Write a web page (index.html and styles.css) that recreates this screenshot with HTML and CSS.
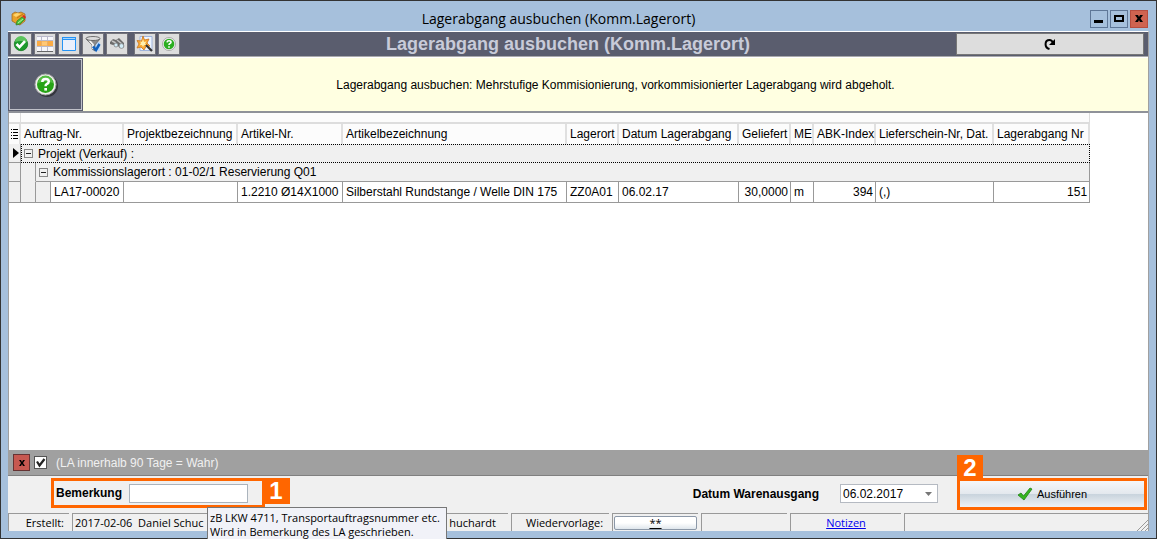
FILE: index.html
```html
<!DOCTYPE html>
<html lang="de">
<head>
<meta charset="utf-8">
<title>Lagerabgang ausbuchen (Komm.Lagerort)</title>
<link rel="stylesheet" href="styles.css">
</head>
<body>
<div class="window">
  <header class="titlebar">
    <svg class="app-icon" viewBox="0 0 16 16" aria-hidden="true">
      <path d="M1 3 4 1l3 1 3-1 4 2v7l-5 4-3-1-5-3z" fill="#e9a22b" stroke="#9b651a" stroke-width=".7"/>
      <path d="M2 4l4-2 4 1-5 3z" fill="#ffd56d"/><path d="M6 7l6-4" stroke="#c37612"/>
      <path d="M5 14l1-4 5-4 3 2-5 5z" fill="#4bc33c" stroke="#2c7b25" stroke-width=".7"/>
      <path d="M7 12l5-4" stroke="#b4f29c"/><path d="M11 5l2-1 2 2-1 2z" fill="#d92c22"/>
    </svg>
    <h1 class="window-title">Lagerabgang ausbuchen (Komm.Lagerort)</h1>
    <div class="window-controls">
      <button class="win-btn" aria-label="Minimieren"><svg viewBox="0 0 16 16"><path d="M3 9h9v3H3z"/></svg></button>
      <button class="win-btn" aria-label="Maximieren"><svg viewBox="0 0 16 16"><path d="M4 5h8v5H4z" fill="none" stroke="#000" stroke-width="2"/></svg></button>
      <button class="win-btn win-close" aria-label="Schließen"><svg viewBox="0 0 16 16"><path d="M4 4h3l1 2 1-2h3L9.500 7.500 12 11H9L8 9l-1 2H4l2.500-3.500z"/></svg></button>
    </div>
  </header>

  <main class="content">
    <div class="toolbar">
      <div class="tools">
        <button class="tool" aria-label="OK"><svg viewBox="0 0 20 20"><circle cx="10" cy="10" r="6.700" fill="#1d9a2c" stroke="#147a20" stroke-width=".8"/><path d="M4 8a6 6 0 0 1 12 0q-6-2-12 0z" fill="#5cc35c"/><path d="M5.500 10l3 3.200 5.500-6" fill="none" stroke="#fff" stroke-width="2.600"/></svg></button>
        <button class="tool" aria-label="Tabelle"><svg viewBox="0 0 20 20"><path d="M2 2h16v15H2z" fill="#f7f7fb"/><path d="M2 7h16v5H2z" fill="#f9ab45"/><path d="M2 2.500h16M2 6.500h16M2 12.500h16M6.500 2v15M12.500 2v15" stroke="#b9b9cb"/><path d="M2 7h16v5H2z" fill="#f9ab45" opacity=".75"/><path d="M7 7.500h5v4H7z" fill="#ffc878"/><path d="M2 17.500h16" stroke="#666"/></svg></button>
        <button class="tool" aria-label="Formular"><svg viewBox="0 0 20 20"><path d="M3.500 3.500h13v13h-13z" fill="#eaf0fc" stroke="#2593f5"/><path d="M3 3h14v3H3z" fill="#2593f5"/><path d="M4 4.500h12" stroke="#a4d5ff"/></svg></button>
        <button class="tool" aria-label="Filter"><svg viewBox="0 0 20 20"><path d="M10 8h7v9h-7z" fill="#bcd8f8"/><path d="M3 5l6 6v4l3 2v-6l5-6z" fill="#8b8b8b" stroke="#555" stroke-width=".6"/><path d="M6 6l4 4.500V15" stroke="#f4f4f4" stroke-width="1.800" fill="none"/><ellipse cx="10" cy="4.500" rx="7" ry="2" fill="#dcdcdc" stroke="#555" stroke-width=".8"/><path d="M10 12.500l3 3.500 3.500-6" fill="none" stroke="#1161bd" stroke-width="2.500"/></svg></button>
        <button class="tool" aria-label="Suchen"><svg viewBox="0 0 20 20"><path d="M3 8l3-3 3 1 3-2 5 5v4l-4 1-4-4-3 1-3-1z" fill="#6c6c6c"/><path d="M5 7l4 2M10 6l5 4" stroke="#c4c4c4" stroke-width="1.500"/><circle cx="9" cy="11" r="2" fill="#d3edf8" stroke="#777" stroke-width=".7"/><circle cx="14.500" cy="12" r="2.400" fill="#d3edf8" stroke="#777" stroke-width=".7"/></svg></button>
        <button class="tool tool-group" aria-label="Assistent"><svg viewBox="0 0 20 20"><path d="M5 2.500h12v14H5z" fill="#edf4ff" stroke="#9fb4dc"/><path d="M8 2l1.500 4L14 5l-2 4 3 3-4 .5L9 16l-3-3-4 1 2-4-2-3.500 4.500.5z" fill="#fbab35" stroke="#c9731b" stroke-width=".8"/><path d="M8 5l1 3 2.500-.5L10 9.500l1 1.500-2 0-1 2-1-2-2 0 1-2-1-1.500 2 .5z" fill="#fff0ae"/><path d="M11 11l6 6" stroke="#333" stroke-width="2.200"/></svg></button>
        <button class="tool" aria-label="Hilfe"><svg viewBox="0 0 20 20"><circle cx="10" cy="10" r="6.500" fill="#f4f4f4" stroke="#999" stroke-width=".8"/><circle cx="10" cy="10" r="5.300" fill="#2bae20"/><path d="M8 8.300q.2-1.600 2-1.600 2 0 2 1.500 0 1-1.400 1.600-.6.300-.6 1.300M10 12.200v1.500" fill="none" stroke="#fff" stroke-width="1.600"/></svg></button>
      </div>
      <h2 class="form-title">Lagerabgang ausbuchen (Komm.Lagerort)</h2>
      <button class="refresh" aria-label="Aktualisieren"><svg viewBox="0 0 14 14"><path d="M6.500 12C1 10.500 1.500 3 6.500 3q2.500 0 3.500 3" fill="none" stroke="#000" stroke-width="2"/><path d="M12 2v6H6z"/></svg></button>
    </div>

    <div class="info">
      <button class="info-help" aria-label="Hilfe anzeigen"><svg viewBox="0 0 26 26"><circle cx="14" cy="14" r="11" fill="#33353d"/><circle cx="12.500" cy="12.500" r="10.500" fill="#f0f0ee" stroke="#a5a5a5"/><circle cx="12.500" cy="12.500" r="8.500" fill="#27a316"/><path d="M5 11a7.500 7.500 0 0 1 15 0q-7-3-15 0z" fill="#54bd43"/><path d="M9.300 10q0-3 3.300-3 3.200 0 3.200 2.600 0 1.600-2.200 2.600-1 .5-1 2" fill="none" stroke="#fff" stroke-width="2.500"/><path d="M11.300 16h2.700v2.600h-2.700z" fill="#fff"/></svg></button>
      <p class="info-text">Lagerabgang ausbuchen: Mehrstufige Kommisionierung, vorkommisionierter Lagerabgang wird abgeholt.</p>
    </div>

    <section class="grid-area">
      <table class="grid">
        <colgroup>
          <col class="w-mark"><col class="w-indent"><col class="w-indent"><col class="w-order"><col class="w-project"><col class="w-article"><col class="w-name"><col class="w-place"><col class="w-date"><col class="w-qty"><col class="w-unit"><col class="w-index"><col class="w-note"><col class="w-number">
        </colgroup>
        <thead>
          <tr class="band"><td></td><td colspan="13"></td></tr>
          <tr class="heads">
            <th class="mark"><svg class="list-icon" viewBox="0 0 8 10"><path d="M0 .5h1M2 .5h5M0 3.500h1M2 3.500h5M0 6.500h1M2 6.500h5M0 9.500h1M2 9.500h5" stroke="#000"/></svg></th>
            <th colspan="3">Auftrag-Nr.</th><th>Projektbezeichnung</th><th>Artikel-Nr.</th><th>Artikelbezeichnung</th><th>Lagerort</th><th>Datum Lagerabgang</th><th>Geliefert</th><th>ME</th><th>ABK-Index</th><th>Lieferschein-Nr, Dat.</th><th>Lagerabgang Nr</th>
          </tr>
        </thead>
        <tbody>
          <tr class="group">
            <td class="mark"><svg class="arrow-icon" viewBox="0 0 6 10"><path d="M0 0l6 5-6 5z"/></svg></td>
            <td colspan="13" class="focus"><span class="group-label"><button class="toggle" aria-label="Zuklappen"></button>Projekt (Verkauf) :</span></td>
          </tr>
          <tr class="group">
            <td class="mark"></td><td class="indent"></td>
            <td colspan="12" class="subgroup"><span class="group-label"><button class="toggle" aria-label="Zuklappen"></button>Kommissionslagerort : 01-02/1 Reservierung Q01</span></td>
          </tr>
          <tr class="record">
            <td class="mark"></td><td class="indent last"></td><td class="indent last"></td>
            <td>LA17-00020</td><td></td><td>1.2210 Ø14X1000</td><td>Silberstahl Rundstange / Welle DIN 175</td><td>ZZ0A01</td><td>06.02.17</td><td class="num">30,0000</td><td>m</td><td class="num">394</td><td>(,)</td><td class="num">151</td>
          </tr>
        </tbody>
      </table>
    </section>

    <div class="filterbar">
      <button class="filter-clear" aria-label="Filter entfernen"><svg viewBox="0 0 8 8"><path d="M1 1h2l1 2 1-2h2L5 4l2 3H5L4 5 3 7H1l2-3z"/></svg></button>
      <label class="filter-label">
        <span class="tick"><input type="checkbox" checked><svg viewBox="0 0 13 13"><path d="M3 5.500l2.500 4L10.500 3" fill="none" stroke="#222" stroke-width="2.200"/></svg></span>
        (LA innerhalb 90 Tage = Wahr)
      </label>
    </div>

    <div class="actions">
      <div class="remark">
        <label for="bemerkung">Bemerkung</label>
        <input id="bemerkung" type="text">
        <span class="badge badge-one">1</span>
        <div class="tooltip" role="tooltip">zB LKW 4711, Transportauftragsnummer etc.<br>Wird in Bemerkung des LA geschrieben.</div>
      </div>
      <div class="issue-date">
        <label for="datum">Datum Warenausgang</label>
        <span class="date-box"><select id="datum"><option>06.02.2017</option></select><svg viewBox="0 0 7 4"><path d="M0 0h7L3.500 4z" fill="#777"/></svg></span>
      </div>
      <div class="run">
        <button class="run-btn"><svg viewBox="0 0 16 14"><path d="M1 8l3-2 2.500 3L13 1l2 1-8 11z" fill="#35b51f" stroke="#218214" stroke-width=".8"/></svg>Ausführen</button>
        <span class="badge badge-two">2</span>
      </div>
    </div>

    <footer class="status">
      <span class="cell cell-created">Erstellt:</span>
      <span class="cell cell-user"><span>2017-02-06&nbsp; Daniel Schuc</span><span>huchardt</span></span>
      <span class="cell cell-follow">Wiedervorlage:</span>
      <span class="cell cell-stars"><button class="stars">**</button></span>
      <span class="cell cell-empty"></span>
      <span class="cell cell-notes"><a href="#">Notizen</a></span>
      <span class="cell cell-rest"><svg viewBox="0 0 12 12"><path d="M1 12L12 1M5 12l7-7M9 12l3-3" stroke="#999"/></svg></span>
    </footer>
  </main>
</div>
</body>
</html>
```
FILE: styles.css
```css
* { box-sizing: border-box; }
html { overflow: hidden; }
body { margin: 0; font: 12px/14px "Liberation Sans", Arial, sans-serif; color: #000; }
button, input, select { font: inherit; color: inherit; margin: 0; padding: 0; border-radius: 0; }
h1, h2, p { margin: 0; }
svg { display: block; }

.window { height: 100vh; display: flex; flex-direction: column; background: #a6c0dc; border: 1px solid #333; padding: 0 7px 7px; }
.titlebar { flex: none; height: 30px; display: flex; align-items: center; padding: 6px 1px 0 3px; }
.app-icon { width: 16px; height: 16px; }
.window-title { flex: 1; text-align: center; font: 14px/20px "Open Sans", "Noto Sans", sans-serif; }
.window-controls { display: flex; gap: 2px; }
.win-btn { width: 18px; height: 18px; border: 1px solid #5f7797; background: #a6c0dc; }
.win-close { background: #cf6350; border-color: #b74d3f; }

.content { flex: 1; min-height: 0; display: flex; flex-direction: column; background: #f0f0f0; border-top: 1px solid #fff; border-right: 1px solid #a0a0a0; }
.toolbar { flex: none; height: 25px; display: flex; align-items: center; background: #5a5d6e; border-bottom: 1px solid #aaa; padding: 0 4px 0 2px; }
.tools { display: flex; gap: 2px; }
.tool { width: 22px; height: 22px; background: #ddd; border: 1px solid #73737a; }
.tool svg { width: 20px; height: 20px; }
.tool-group { margin-left: 4px; }
.form-title { flex: 1; text-align: center; color: #c8cbd9; font-size: 18px; line-height: 22px; }
.refresh { width: 188px; height: 22px; display: grid; place-items: center; background: #ddd; border: 1px solid #777; }
.refresh svg { width: 14px; height: 14px; }

.info { flex: none; height: 56px; display: flex; background: #ffffe1; border-top: 1px solid #fff; border-bottom: 2px solid #8f9299; }
.info-help { width: 75px; display: grid; place-items: center; background: #5a5d6e; border: 1px solid #5a5d6e; outline: 1px solid #c0c1c9; outline-offset: -2px; }
.info-help svg { width: 26px; height: 26px; }
.info-text { flex: 1; align-self: center; text-align: center; }

.grid-area { flex: 1; min-height: 0; background: #fff; overflow: hidden; border-left: 1px solid #a0a0a0; }
.grid { table-layout: fixed; width: 1081px; border-collapse: separate; border-spacing: 0; }
.w-mark { width: 12px; } .w-indent { width: 15px; } .w-order { width: 73px; } .w-project { width: 114px; } .w-article { width: 105px; } .w-name { width: 224px; } .w-place { width: 52px; } .w-date { width: 120px; } .w-qty { width: 52px; } .w-unit { width: 23px; } .w-index { width: 62px; } .w-note { width: 118px; } .w-number { width: 96px; }
.grid td, .grid th { padding: 0 1px 0 3px; white-space: nowrap; text-align: left; font-weight: 400; border-right: 1px solid #999; border-bottom: 1px solid #999; }
.grid .band td { height: 11px; background: #fcfcfc; border-color: #ddd; border-bottom-width: 2px; }
.grid .heads th { height: 20px; background: #fcfcfc; border-right: 2px solid #e0e0e0; border-bottom: 0; }
.grid .mark { background: #f0f0f0; padding: 0 2px; }
.list-icon { width: 8px; height: 10px; }
.arrow-icon { width: 6px; height: 10px; margin-left: 2px; }
.group td { height: 19px; background: #f0f0f0; }
.grid .focus { border: 1px dotted #000; padding-left: 2px; }
.grid .indent { border-bottom-color: #f0f0f0; background: #f0f0f0; }
.grid .last { border-bottom-color: #999; }
.group-label { display: flex; align-items: center; gap: 5px; }
.toggle { width: 9px; height: 9px; display: grid; place-items: center; background: #f0f0f0; border: 1px solid #888; }
.toggle::before { content: ""; width: 5px; height: 1px; background: #222; }
.record td { height: 21px; }
.grid .num { text-align: right; padding-right: 2px; }

.filterbar { flex: none; height: 26px; display: flex; align-items: center; gap: 4px; padding-left: 5px; background: #a0a0a0; border-bottom: 1px solid #808080; }
.filter-clear { width: 17px; height: 17px; display: grid; place-items: center; background: #c75850; border: 1px solid #633; }
.filter-clear svg { width: 8px; height: 8px; }
.filter-label { display: flex; align-items: center; gap: 9px; color: #f0f0f0; }
.tick { display: grid; }
.tick input { grid-area: 1 / 1; appearance: none; width: 13px; height: 13px; background: #fff; border: 1px solid #555; }
.tick svg { grid-area: 1 / 1; width: 13px; height: 13px; visibility: hidden; }
.tick input:checked + svg { visibility: visible; }

.actions { flex: none; height: 37px; display: flex; align-items: flex-start; padding: 2px 1px 0 43px; }
.actions label { font-weight: 700; }
.remark { position: relative; height: 30px; width: 214px; display: flex; align-items: center; gap: 7px; padding-left: 2px; border: 3px solid #f60; }
.remark input { width: 119px; height: 19px; background: #fff; border: 1px solid #abb4bd; }
.badge { position: absolute; background: #f60; color: #fff; text-align: center; font-weight: 700; font-size: 24px; }
.badge-one { top: -3px; right: -28px; width: 28px; height: 26px; line-height: 26px; }
.badge-two { top: -26px; left: -3px; width: 26px; height: 26px; line-height: 26px; }
.tooltip { position: absolute; z-index: 2; left: 153px; top: 26px; width: 240px; padding: 3px 0 0 2px; white-space: nowrap; font: 11px/14px "Open Sans", "Noto Sans", sans-serif; background: #f1f2f8; border: 1px solid #777; border-bottom: 0; }
.issue-date { margin-left: auto; display: flex; align-items: center; gap: 21px; height: 31px; }
.date-box { display: grid; align-items: center; }
.date-box select { grid-area: 1 / 1; appearance: none; width: 98px; height: 19px; padding-left: 2px; background: #fff; border: 1px solid #b5bac2; }
.date-box svg { grid-area: 1 / 1; justify-self: end; width: 7px; height: 4px; margin-right: 6px; pointer-events: none; }
.run { position: relative; margin-left: 19px; width: 190px; height: 32px; border: 3px solid #f60; }
.run-btn { width: 100%; height: 100%; display: flex; align-items: center; justify-content: center; gap: 4px; font-size: 11px; border: 0; background: linear-gradient(#f5f7f9 0, #e4e9ee 48%, #c9d4dd 52%, #eef2f5 100%); }
.run-btn svg { width: 16px; height: 14px; }

.status { flex: none; height: 18px; display: flex; gap: 3px; font: 11px/16px "Open Sans", "Noto Sans", sans-serif; }
.cell { display: flex; align-items: center; justify-content: center; border-top: 1px solid #999; border-left: 1px solid #999; white-space: nowrap; }
.cell-created { width: 61px; justify-content: flex-end; padding-right: 5px; }
.cell-user { width: 436px; justify-content: space-between; padding: 0 12px 0 2px; }
.cell-follow { width: 98px; padding-left: 8px; }
.cell-stars { width: 86px; padding: 1px; }
.cell-empty { width: 86px; }
.cell-notes { width: 111px; }
.cell-notes a { color: #00e; }
.cell-rest { flex: 1; justify-content: flex-end; align-items: flex-end; }
.cell-rest svg { width: 12px; height: 12px; }
.stars { width: 100%; height: 14px; line-height: 12px; text-decoration: underline; background: linear-gradient(#fff 50%, #dfe6ec); border: 1px solid #8c98a8; border-radius: 2px; }
```
